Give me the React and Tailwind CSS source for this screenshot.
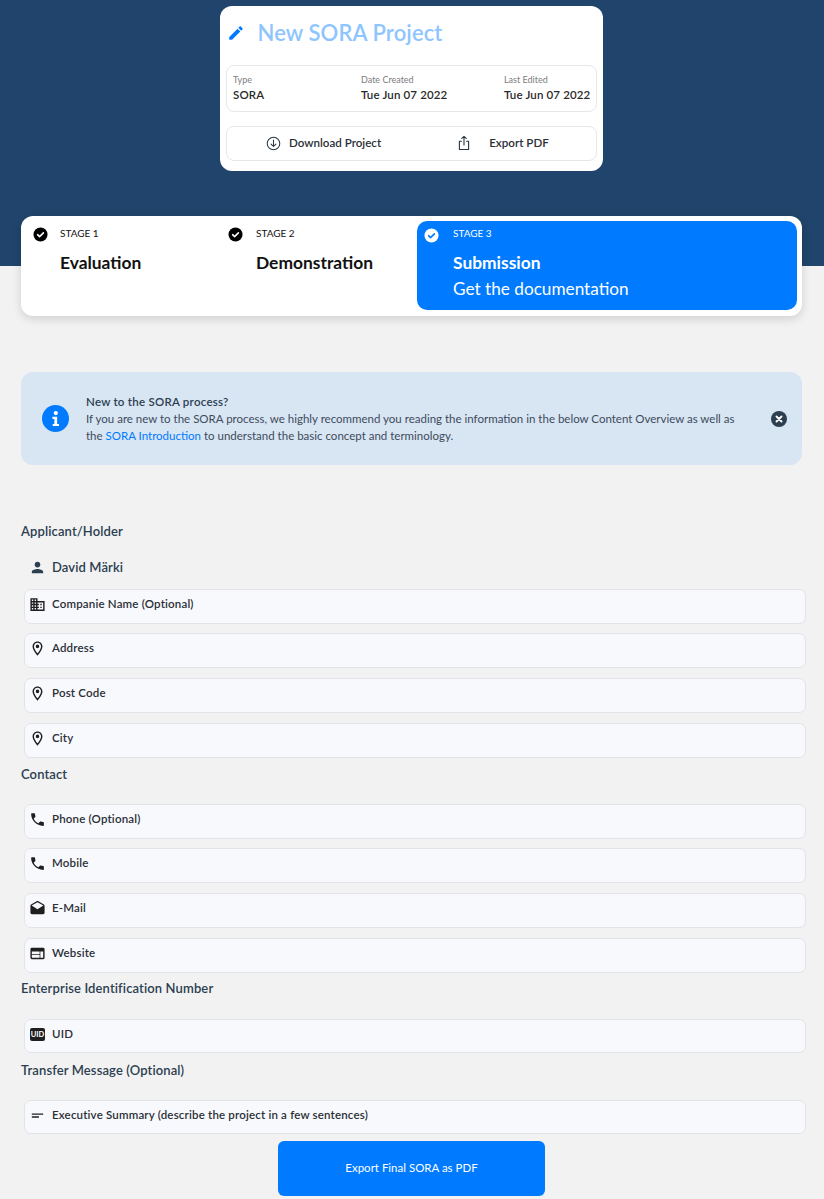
const FONT = "font-['Lato',sans-serif]";

const ICONS = {
  person: 'M12 12c2.21 0 4-1.79 4-4s-1.79-4-4-4-4 1.79-4 4 1.79 4 4 4zm0 2c-2.67 0-8 1.34-8 4v2h16v-2c0-2.66-5.33-4-8-4z',
  domain: 'M12 7V3H2v18h20V7H12zM6 19H4v-2h2v2zm0-4H4v-2h2v2zm0-4H4V9h2v2zm0-4H4V5h2v2zm4 12H8v-2h2v2zm0-4H8v-2h2v2zm0-4H8V9h2v2zm0-4H8V5h2v2zm10 12h-8v-2h2v-2h-2v-2h2v-2h-2V9h8v10zm-2-8h-2v2h2v-2zm0 4h-2v2h2v-2z',
  place: 'M12 2C8.13 2 5 5.13 5 9c0 5.25 7 13 7 13s7-7.75 7-13c0-3.87-3.13-7-7-7zM7 9c0-2.76 2.24-5 5-5s5 2.24 5 5c0 2.88-2.88 7.19-5 9.88C9.92 16.21 7 11.85 7 9zm5-2.5a2.5 2.5 0 1 0 0 5 2.5 2.5 0 0 0 0-5z',
  phone: 'M6.62 10.79c1.44 2.83 3.76 5.14 6.59 6.59l2.2-2.2c.27-.27.67-.36 1.02-.24 1.12.37 2.33.57 3.57.57.55 0 1 .45 1 1V20c0 .55-.45 1-1 1-9.39 0-17-7.61-17-17 0-.55.45-1 1-1h3.5c.55 0 1 .45 1 1 0 1.25.2 2.45.57 3.57.11.35.03.74-.25 1.02l-2.2 2.2z',
  drafts: 'M21.99 8c0-.72-.37-1.35-.94-1.7L12 1 2.95 6.3C2.38 6.65 2 7.28 2 8v10c0 1.1.9 2 2 2h16c1.1 0 2-.9 2-2l-.01-10zM12 13L3.74 7.84 12 3l8.26 4.84L12 13z',
  web: 'M20 4H4c-1.1 0-1.99.9-1.99 2L2 18c0 1.1.9 2 2 2h16c1.1 0 2-.9 2-2V6c0-1.1-.9-2-2-2zm-5 14H4v-4h11v4zm0-5H4V9h11v4zm5 5h-4V9h4v9z',
  shortText: 'M4 9h16v2H4zm0 4h10v2H4z',
  edit: 'M3 17.25V21h3.75L17.81 9.94l-3.75-3.75L3 17.25zM20.71 7.04c.39-.39.39-1.02 0-1.41l-2.34-2.34c-.39-.39-1.02-.39-1.41 0l-1.83 1.83 3.75 3.75 1.83-1.83z',
};

function Icon({ name, className }) {
  return (
    <svg viewBox="0 0 24 24" className={className} fill="currentColor">
      <path d={ICONS[name]} />
    </svg>
  );
}

function CheckBadge({ circle, tick }) {
  return (
    <svg viewBox="0 0 16 16" className="w-[15px] h-[15px] shrink-0">
      <circle cx="8" cy="8" r="7.5" fill={circle} />
      <path d="M4.9 8.2l2.1 2 4.1-4" fill="none" stroke={tick} strokeWidth="1.7" strokeLinecap="round" strokeLinejoin="round" />
    </svg>
  );
}

function Field({ icon, label, height = 'h-[35px]' }) {
  return (
    <div className={`${height} ml-[3px] w-[782px] rounded-[7px] border border-[#e3e4ea] bg-[#f8f9fd] pl-[1px] pt-[6px] flex items-start`}>
      <div className="w-[23px] h-[17px] flex items-center justify-center shrink-0">
        {icon === 'uid' ? (
          <span className="w-[15px] h-[13px] rounded-[2px] bg-[#1f1f1f] text-white text-[7.5px] font-bold flex items-center justify-center">UID</span>
        ) : (
          <Icon name={icon} className="w-[17px] h-[17px] text-[#1f1f1f]" />
        )}
      </div>
      <span className="ml-[3px] text-[11.5px] font-semibold leading-[16.6px] text-[#2a2f36] tracking-[0.18px]">{label}</span>
    </div>
  );
}

function SectionTitle({ children, className }) {
  return <h2 className={`text-[13px] font-semibold leading-[18px] text-[#2c3e50] tracking-[0.12px] ${className}`}>{children}</h2>;
}

function InfoCell({ label, value, className }) {
  return (
    <div className={className}>
      <div className="text-[9px] leading-[10px] text-[#7d7d7d]">{label}</div>
      <div className="mt-[3px] text-[11.5px] font-semibold leading-[14px] text-[#2a2a2a] whitespace-nowrap tracking-[0.15px]">{value}</div>
    </div>
  );
}

function Stage({ stage, title, className, textClass }) {
  return (
    <div className={`w-[195.5px] pl-[12px] pt-[4px] flex items-start ${className}`}>
      <div className="mt-[2px]"><CheckBadge circle="#000000" tick="#ffffff" /></div>
      <div className={textClass}>
        <div className="text-[10px] leading-[16px] text-[#111]">{stage}</div>
        <div className="mt-[11px] text-[17.4px] font-bold leading-[22px] text-[#111]">{title}</div>
      </div>
    </div>
  );
}

export default function App() {
  return (
    <div className={`${FONT} min-h-[1199px] bg-[#f2f2f2] overflow-hidden`}>
      <header className="h-[266px] bg-[#20446b] pt-[6px]">
        <div className="ml-[220px] w-[383px] h-[165px] rounded-[12px] bg-white px-[6px]">
          <div className="flex items-center h-[59px] pb-[5px]">
            <Icon name="edit" className="ml-[1px] w-[18px] h-[18px] text-[#007aff]" />
            <h1 className="ml-[12.5px] text-[22px] font-semibold leading-[28px] text-[#8ec5ff] tracking-[0.1px]">New SORA Project</h1>
          </div>
          <div className="h-[47px] rounded-[8px] border border-[#e5e7eb] flex pl-[6px] pt-[9px]">
            <InfoCell label="Type" value="SORA" className="w-[128px]" />
            <InfoCell label="Date Created" value="Tue Jun 07 2022" className="w-[143px]" />
            <InfoCell label="Last Edited" value="Tue Jun 07 2022" />
          </div>
          <div className="mt-[14px] h-[35px] pb-[1px] rounded-[8px] border border-[#e5e7eb] flex items-center text-[11.6px] font-semibold text-[#2a2f36]">
            <svg viewBox="0 0 16 16" className="ml-[39px] w-[15px] h-[15px]" fill="none" stroke="#2a3442" strokeWidth="1.1" strokeLinecap="round" strokeLinejoin="round">
              <circle cx="8" cy="8" r="6.7" />
              <path d="M8 4.4v6.6M5.4 8.6L8 11.2l2.6-2.6" />
            </svg>
            <span className="ml-[8px]">Download Project</span>
            <svg viewBox="0 0 16 16" className="ml-[75px] w-[16px] h-[16px]" fill="none" stroke="#2a3442" strokeWidth="1.1" strokeLinecap="round" strokeLinejoin="round">
              <path d="M5.4 6.2H3.4v8.3h9.2V6.2h-2M8 10V1.4M5.8 3.4L8 1.3l2.2 2.1" />
            </svg>
            <span className="ml-[17px]">Export PDF</span>
          </div>
        </div>
      </header>

      <section className="mt-[-50px] ml-[21px] w-[781px] h-[100px] rounded-[12px] bg-white shadow-[0_3px_10px_rgba(0,0,0,0.14)] flex pt-[5px] pr-[5px] relative">
        <Stage stage="STAGE 1" title="Evaluation" textClass="ml-[12px]" />
        <Stage stage="STAGE 2" title="Demonstration" className="-ml-[1px]" textClass="ml-[13.5px]" />
        <div className="ml-[6px] w-[380px] h-[89px] rounded-[10px] bg-[#007aff] text-white pl-[7px] pt-[4px] flex items-start">
          <div className="mt-[3px]"><CheckBadge circle="#ffffff" tick="#007aff" /></div>
          <div className="ml-[14px]">
            <div className="text-[10px] leading-[16px]">STAGE 3</div>
            <div className="mt-[11px] text-[17.4px] font-bold leading-[22px]">Submission</div>
            <div className="mt-[4px] text-[17.2px] leading-[22px]">Get the documentation</div>
          </div>
        </div>
      </section>

      <section className="mt-[56px] ml-[21px] w-[781px] h-[93px] rounded-[12px] bg-[#d8e5f3] flex items-center pl-[21px]">
        <svg viewBox="0 0 28 28" className="w-[27px] h-[27px] shrink-0">
          <circle cx="14" cy="14" r="14" fill="#007aff" />
          <circle cx="14.3" cy="8.4" r="2.2" fill="#ffffff" />
          <path d="M10.8 12.3h4.9v7.4h1.9v2.2h-6.5v-2.2h1.7v-5.2h-2z" fill="#ffffff" />
        </svg>
        <div className="ml-[17px] w-[665px] text-[11.5px] leading-[17px] text-[#3d4b5c]">
          <div className="font-semibold text-[#2c3e50] tracking-[0.25px]">New to the SORA process?</div>
          <div>If you are new to the SORA process, we highly recommend you reading the information in the below Content Overview as well as</div>
          <div>the <span className="text-[#007aff]">SORA Introduction</span> to understand the basic concept and terminology.</div>
        </div>
        <svg viewBox="0 0 16 16" className="ml-[20px] w-[16px] h-[16px] shrink-0">
          <circle cx="8" cy="8" r="8" fill="#2c3e50" />
          <path d="M5.5 5.5l5 5M10.5 5.5l-5 5" stroke="#ffffff" strokeWidth="1.9" strokeLinecap="round" />
        </svg>
      </section>

      <main className="ml-[21px]">
        <SectionTitle className="mt-[57px]">Applicant/Holder</SectionTitle>
        <div className="mt-[18.5px] ml-[8px] h-[18px] flex items-center text-[#2c3e50]">
          <Icon name="person" className="w-[17px] h-[17px]" />
          <span className="ml-[6px] text-[13px] font-semibold tracking-[0.1px]">David Märki</span>
        </div>
        <div className="mt-[12px] flex flex-col gap-[9.7px]">
          <Field icon="domain" label="Companie Name (Optional)" />
          <Field icon="place" label="Address" />
          <Field icon="place" label="Post Code" />
          <Field icon="place" label="City" />
        </div>

        <SectionTitle className="mt-[7px]">Contact</SectionTitle>
        <div className="mt-[21px] flex flex-col gap-[9.7px]">
          <Field icon="phone" label="Phone (Optional)" />
          <Field icon="phone" label="Mobile" />
          <Field icon="drafts" label="E-Mail" />
          <Field icon="web" label="Website" />
        </div>

        <SectionTitle className="mt-[6px]">Enterprise Identification Number</SectionTitle>
        <div className="mt-[22px]"><Field icon="uid" label="UID" height="h-[34px]" /></div>

        <SectionTitle className="mt-[8px]">Transfer Message (Optional)</SectionTitle>
        <div className="mt-[21px]"><Field icon="shortText" label="Executive Summary (describe the project in a few sentences)" height="h-[34px]" /></div>

        <button className="mt-[7px] ml-[257px] block w-[267px] h-[55px] pb-[2px] rounded-[6px] bg-[#007aff] text-white text-[11.5px]">
          Export Final SORA as PDF
        </button>
      </main>
    </div>
  );
}
